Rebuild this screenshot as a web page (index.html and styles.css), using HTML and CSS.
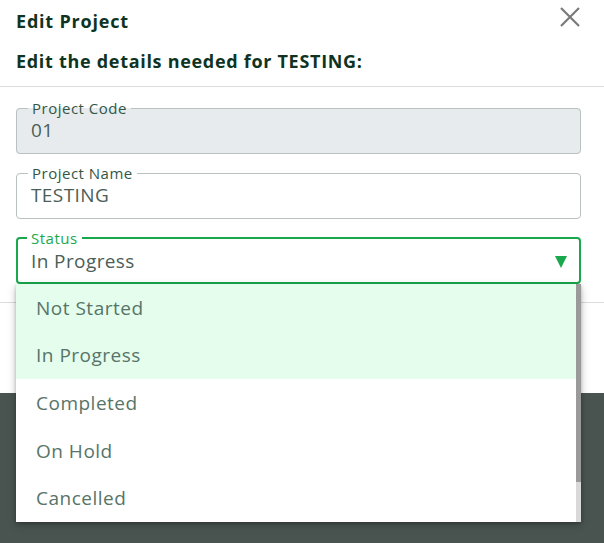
FILE: index.html
```html
<!DOCTYPE html>
<html>
<head>
<meta charset="utf-8">
<link rel="stylesheet" href="styles.css">
</head>
<body>
<div class="modal">
  <div class="header">
    <div class="titles">
      <h1 class="title">Edit Project</h1>
      <h2 class="subtitle">Edit the details needed for TESTING:</h2>
    </div>
    <button class="close" aria-label="Close">
      <svg width="22" height="22" viewBox="0 0 22 22"><path d="M2 2 L20 20 M20 2 L2 20" stroke="#7a7a7a" stroke-width="2.2" fill="none"/></svg>
    </button>
  </div>
  <div class="body">
    <fieldset class="field disabled">
      <legend>Project Code</legend>
      <div class="value">01</div>
    </fieldset>
    <fieldset class="field">
      <legend>Project Name</legend>
      <div class="value">TESTING</div>
    </fieldset>
    <div class="select-wrap">
      <fieldset class="field focused">
        <legend>Status</legend>
        <div class="value">In Progress</div>
        <span class="caret"></span>
      </fieldset>
      <ul class="menu">
        <li class="opt hl">Not Started</li>
        <li class="opt hl">In Progress</li>
        <li class="opt">Completed</li>
        <li class="opt">On Hold</li>
        <li class="opt">Cancelled</li>
        <div class="scroll"><div class="thumb"></div></div>
      </ul>
    </div>
  </div>
  <div class="footer"></div>
</div>
</body>
</html>
```
FILE: styles.css
```css
html, body { margin: 0; padding: 0; }
body {
  background: #495450;
  font-family: "Open Sans", Roboto, sans-serif;
  width: 604px;
  height: 543px;
  overflow: hidden;
}
.modal {
  background: #fff;
  height: 393px;
}
.header {
  display: flex;
  justify-content: space-between;
  padding: 0 23px 0 16px;
  height: 87px;
  border-bottom: 1px solid #dcdcdc;
  box-sizing: border-box;
}
.title {
  margin: 9px 0 0;
  font-size: 18px;
  font-weight: 700;
  color: #0f3322;
  line-height: 24px;
  letter-spacing: 0.8px;
}
.subtitle {
  margin: 17px 0 0;
  font-size: 18px;
  font-weight: 700;
  color: #0f3322;
  line-height: 22px;
  letter-spacing: 0.7px;
}
.close {
  border: 0;
  background: none;
  padding: 0;
  margin: 6px 0 0;
  width: 22px;
  height: 22px;
  cursor: pointer;
}
.close svg { display: block; }
.body {
  padding: 14px 23px 0 16px;
  height: 216px;
  border-bottom: 1px solid #dcdcdc;
  box-sizing: border-box;
}
.field {
  margin: 0 0 12px;
  padding: 0 14px;
  border: 1px solid #b9c2c0;
  border-radius: 4px;
  height: 53px;
  box-sizing: border-box;
  position: relative;
  min-width: 0;
}
.field legend {
  padding: 0 4px;
  margin-left: -3px;
  font-size: 15px;
  line-height: 14px;
  letter-spacing: 0.5px;
  color: #325747;
}
.field .value {
  font-size: 19px;
  line-height: 24px;
  letter-spacing: 0.4px;
  color: #4b5e57;
  margin-top: 3px;
}
.field.disabled { background: #e7ebed; }
.field.focused {
  border: 2px solid #1aa84c;
  padding: 0 13px;
}
.field.focused legend { color: #1aa84c; margin-left: -4px; }
.field.focused .value { margin-top: 4px; }
.caret {
  position: absolute;
  right: 12px;
  top: 11px;
  width: 0;
  height: 0;
  border-left: 6px solid transparent;
  border-right: 6px solid transparent;
  border-top: 12px solid #1aa84c;
}
.select-wrap { position: relative; }
.menu {
  position: absolute;
  left: 0;
  right: 0;
  top: 53px;
  margin: 0;
  padding: 0;
  list-style: none;
  background: #fff;
  height: 238px;
  box-shadow: 0 3px 8px rgba(0,0,0,0.25), 0 1px 3px rgba(0,0,0,0.2);
  overflow: hidden;
}
.opt {
  height: 47.6px;
  display: flex;
  align-items: center;
  padding-left: 20px;
  font-size: 19px;
  letter-spacing: 0.5px;
  color: #577468;
  margin-right: 5px;
}
.opt.hl { background: #e4fded; }
.scroll {
  position: absolute;
  right: 0;
  top: 0;
  bottom: 0;
  width: 5px;
  background: #d9d9d9;
}
.thumb {
  height: 198px;
  background: #9a9a9a;
}
```
